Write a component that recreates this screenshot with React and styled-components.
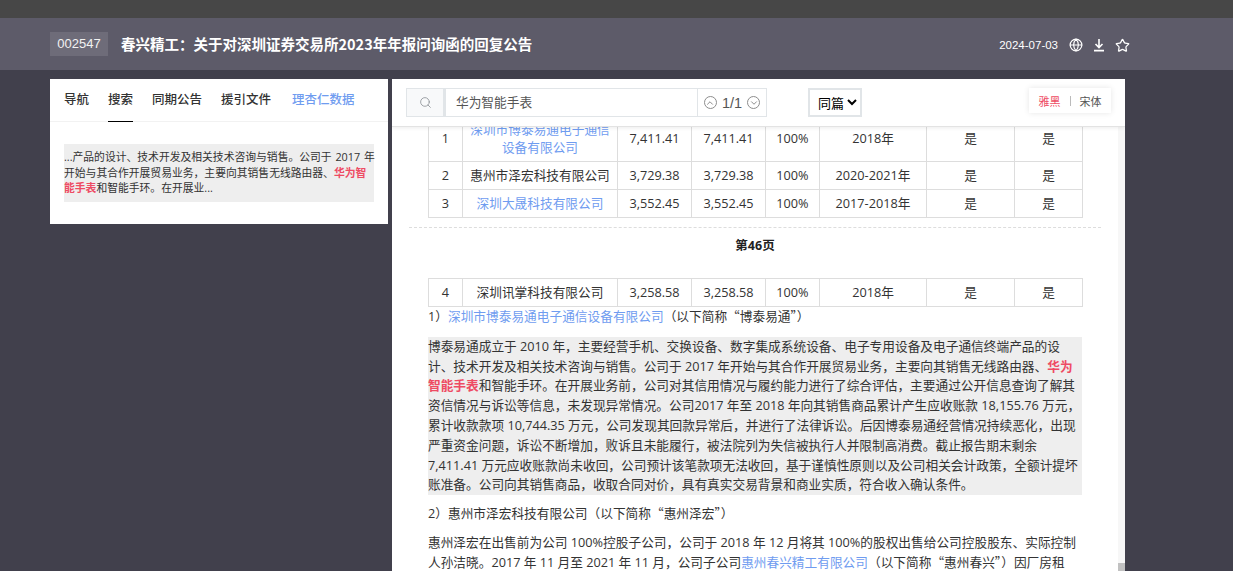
import React from "react";
import styled, { createGlobalStyle } from "styled-components";
import { Search, Globe, Star, ChevronUp, ChevronDown } from "lucide-react";

const Global = createGlobalStyle`
  html, body { margin: 0; padding: 0; height: 100%; overflow: hidden; background: #41404c; }
  body { font-family: "Noto Sans CJK SC", "Noto Sans", sans-serif; color: #333; }
  * { box-sizing: border-box; }
`;
const Page = styled.div`height: 571px; display: flex; flex-direction: column; overflow: hidden;`;
const TopStrip = styled.div`height: 18px; background: #474747; flex: none;`;
const Header = styled.header`
  height: 52px; flex: none; background: #5d5b69; color: #fff; display: flex; align-items: center;
  padding: 0 103px 0 50px;
`;
const Code = styled.span`
  width: 58px; height: 24px; background: #6e6c79; color: #f2f2f2; font-size: 13px; line-height: 24px;
  text-align: center; font-family: "Liberation Sans", sans-serif; margin-right: 13px;
`;
const Title = styled.h1`margin: 0 0 2px; font-size: 14.5px; font-weight: 700; flex: 1; letter-spacing: 0;`;
const Meta = styled.div`display: flex; align-items: center; gap: 9px; margin-top: 2px;`;
const DateText = styled.span`font-size: 11.5px; font-family: "Liberation Sans", sans-serif; margin-right: 2px;`;
const Body = styled.main`flex: 1; min-height: 0; display: flex; gap: 4px; padding: 9px 108px 0 50px; align-items: flex-start;`;
const Side = styled.aside`width: 338px; height: 145px; background: #fff; flex: none;`;
const Tabs = styled.nav`height: 43px; display: flex; gap: 19px; padding-left: 14px; border-bottom: 1px solid #f2f2f2;`;
const Tab = styled.span`
  height: 43px; line-height: 40px; font-size: 12.5px; white-space: nowrap; color: ${p => p.$blue ? "#6f9cf0" : "#333"};
  border-bottom: ${p => p.$active ? "1px solid #000" : "none"}; font-weight: 500;
  margin-left: ${p => p.$blue ? "2px" : "0"};
`;
const Snippet = styled.p`
  margin: 22px 14px 0; background: #eee; padding: 5px 0; font-size: 10.8px; line-height: 15.5px; height: 58px; color: #333;
  font-family: "Open Sans", "Noto Sans CJK SC", sans-serif; word-spacing: 1px;
`;
const Red = styled.span`color: #ee4b63; font-weight: 700;`;
const Line = styled.span`display: block; white-space: nowrap;`;
const Doc = styled.section`width: 733px; height: 492px; background: #fff; display: flex; flex-direction: column; overflow: hidden; flex: none;`;
const Toolbar = styled.div`
  height: 48px; flex: none; display: flex; align-items: flex-start; padding: 9px 14px 0; border-bottom: 1px solid #e3e3e3;
  box-shadow: 0 1px 4px rgba(0,0,0,.08); position: relative; z-index: 2; background: #fff;
`;
const SearchIcon = styled.div`width: 38px; height: 29px; border: 1px solid #e1e5e8; background: #f8f9fa; color: #8a8f94; display: flex; align-items: center; justify-content: center;`;
const Query = styled.div`width: 254px; height: 29px; border: 1px solid #e1e5e8; border-left-width: 2px; padding-left: 10px; font-size: 12.7px; line-height: 26px; color: #555;`;
const Pager = styled.div`width: 69px; height: 29px; border: 1px solid #e1e5e8; border-left: 0; display: flex; align-items: center; justify-content: center; gap: 5px; font-size: 14.5px; color: #555; font-family: "Liberation Sans", sans-serif;`;
const Round = styled.span`width: 13px; height: 13px; border: 1px solid #8d8d8d; border-radius: 50%; display: flex; align-items: center; justify-content: center; color: #777;`;
const Scope = styled.select`
  width: 54px; height: 29px; margin-left: 41px; border: 2px solid #e1e5e8; background: #fff; color: #000;
  font-size: 13px; font-family: "Noto Sans CJK SC", sans-serif; padding: 0 0 0 4px;
`;
const FontSwitch = styled.div`
  margin-left: auto; width: 82px; height: 25px; box-shadow: 0 0 6px rgba(0,0,0,.1); background: #fff; display: flex; align-items: center;
  justify-content: center; gap: 9px; font-size: 11px; color: #555; line-height: 22px;
`;
const FontRed = styled.span`color: #ee4b63;`;
const Sep = styled.i`width: 1px; height: 10px; background: #bbb; margin-top: 1px;`;
const ScrollRow = styled.div`flex: 1; min-height: 0; display: flex; overflow: hidden;`;
const Content = styled.div`
  flex: 1; min-width: 0; padding: 0 36px; margin-top: -12px; font-size: 12.7px; color: #333;
  font-family: "Open Sans", "Noto Sans CJK SC", sans-serif;
`;
const Track = styled.div`width: 7px; flex: none; background: #f7f7f7; display: flex; flex-direction: column; justify-content: flex-end;`;
const Thumb = styled.div`height: 8px; background: #c1c1c1;`;
const Table = styled.table`border-collapse: collapse; table-layout: fixed; width: 654px; text-align: center; font-size: 12.7px; line-height: 18px;`;
const Td = styled.td`
  border: 1px solid #ddd; padding: 0 0 2px; height: ${p => p.$tall ? "46px" : "28px"};
  color: ${p => p.$blue ? "#6f9cf0" : "#333"};
`;
const Dashed = styled.div`border-top: 1px dashed #ddd; margin: 9px -19px 0 -19px;`;
const PageNo = styled.div`text-align: center; font-weight: 700; font-size: 12.5px; height: 50px; line-height: 18px; padding-top: 9px; color: #222;`;
const Para = styled.p`margin: ${p => p.$m || "0"}; line-height: 19.8px;`;
const Marked = styled.div`background: #eee; margin-top: 10px; line-height: 19.8px; padding: 0;`;
const Blue = styled.span`color: #6f9cf0;`;
const Quoted = styled.span`font-family: "Noto Sans CJK SC", sans-serif; line-height: 0;`;

const widths = [34, 155, 74, 74, 54, 107, 88, 68];
const rows = [
  ["1", ["深圳市博泰易通电子通信", "设备有限公司"], "7,411.41", "7,411.41", "100%", "2018年", "是", "是", true],
  ["2", "惠州市泽宏科技有限公司", "3,729.38", "3,729.38", "100%", "2020-2021年", "是", "是"],
  ["3", "深圳大晟科技有限公司", "3,552.45", "3,552.45", "100%", "2017-2018年", "是", "是", false, true],
];
const Colgroup = () => <colgroup>{widths.map((w, i) => <col key={i} style={{ width: w }} />)}</colgroup>;

const Row = ({ r }) => {
  const tall = r[8], blue = r[9] || tall;
  return (
    <tr>
      <Td $tall={tall}>{r[0]}</Td>
      <Td $tall={tall} $blue={blue}>{Array.isArray(r[1]) ? r[1].map(t => <Line key={t}>{t}</Line>) : r[1]}</Td>
      {r.slice(2, 8).map((c, i) => <Td key={i} $tall={tall}>{c}</Td>)}
    </tr>
  );
};

export default function App() {
  return (
    <Page>
      <Global />
      <TopStrip />
      <Header>
        <Code>002547</Code>
        <Title>春兴精工：关于对深圳证券交易所2023年年报问询函的回复公告</Title>
        <Meta>
          <DateText>2024-07-03</DateText>
          <Globe size={14} strokeWidth={2} />
          <svg width="14" height="14" viewBox="0 0 14 14" fill="none" stroke="#fff" strokeWidth="1.6"><path d="M7 1v8M3.5 6 7 9.5 10.5 6M2 12.6h10" /></svg>
          <Star size={15} strokeWidth={2} />
        </Meta>
      </Header>
      <Body>
        <Side>
          <Tabs>
            <Tab>导航</Tab>
            <Tab $active>搜索</Tab>
            <Tab>同期公告</Tab>
            <Tab>援引文件</Tab>
            <Tab $blue>理杏仁数据</Tab>
          </Tabs>
          <Snippet>
            <Line>...产品的设计、技术开发及相关技术咨询与销售。公司于 2017 年</Line>
            <Line>开始与其合作开展贸易业务，主要向其销售无线路由器、<Red>华为智</Red></Line>
            <Line><Red>能手表</Red>和智能手环。在开展业...</Line>
          </Snippet>
        </Side>
        <Doc>
          <Toolbar>
            <SearchIcon><Search size={13} strokeWidth={1.5} /></SearchIcon>
            <Query>华为智能手表</Query>
            <Pager>
              <Round><ChevronUp size={10} /></Round>
              1/1
              <Round><ChevronDown size={10} /></Round>
            </Pager>
            <Scope defaultValue="同篇"><option>同篇</option></Scope>
            <FontSwitch><FontRed>雅黑</FontRed><Sep />宋体</FontSwitch>
          </Toolbar>
          <ScrollRow>
            <Content>
              <Table>
                <Colgroup />
                <tbody>{rows.map(r => <Row key={r[0]} r={r} />)}</tbody>
              </Table>
              <Dashed />
              <PageNo>第46页</PageNo>
              <Table>
                <Colgroup />
                <tbody><Row r={["4", "深圳讯掌科技有限公司", "3,258.58", "3,258.58", "100%", "2018年", "是", "是"]} /></tbody>
              </Table>
              <Para>1）<Blue>深圳市博泰易通电子通信设备有限公司</Blue>（以下简称<Quoted>“博泰易通”</Quoted>）</Para>
              <Marked>
                <Line>博泰易通成立于 2010 年，主要经营手机、交换设备、数字集成系统设备、电子专用设备及电子通信终端产品的设</Line>
                <Line>计、技术开发及相关技术咨询与销售。公司于 2017 年开始与其合作开展贸易业务，主要向其销售无线路由器、<Red>华为</Red></Line>
                <Line><Red>智能手表</Red>和智能手环。在开展业务前，公司对其信用情况与履约能力进行了综合评估，主要通过公开信息查询了解其</Line>
                <Line>资信情况与诉讼等信息，未发现异常情况。公司2017 年至 2018 年向其销售商品累计产生应收账款 18,155.76 万元，</Line>
                <Line>累计收款款项 10,744.35 万元，公司发现其回款异常后，并进行了法律诉讼。后因博泰易通经营情况持续恶化，出现</Line>
                <Line>严重资金问题，诉讼不断增加，败诉且未能履行，被法院列为失信被执行人并限制高消费。截止报告期末剩余</Line>
                <Line>7,411.41 万元应收账款尚未收回，公司预计该笔款项无法收回，基于谨慎性原则以及公司相关会计政策，全额计提坏</Line>
                <Line>账准备。公司向其销售商品，收取合同对价，具有真实交易背景和商业实质，符合收入确认条件。</Line>
              </Marked>
              <Para $m="9px 0 0">2）惠州市泽宏科技有限公司（以下简称<Quoted>“惠州泽宏”</Quoted>）</Para>
              <Para $m="9px 0 0">
                <Line>惠州泽宏在出售前为公司 100%控股子公司，公司于 2018 年 12 月将其 100%的股权出售给公司控股股东、实际控制</Line>
                <Line>人孙洁晓。2017 年 11 月至 2021 年 11 月，公司子公司<Blue>惠州春兴精工有限公司</Blue>（以下简称<Quoted>“惠州春兴”</Quoted>）因厂房租</Line>
              </Para>
            </Content>
            <Track><Thumb /></Track>
          </ScrollRow>
        </Doc>
      </Body>
    </Page>
  );
}
